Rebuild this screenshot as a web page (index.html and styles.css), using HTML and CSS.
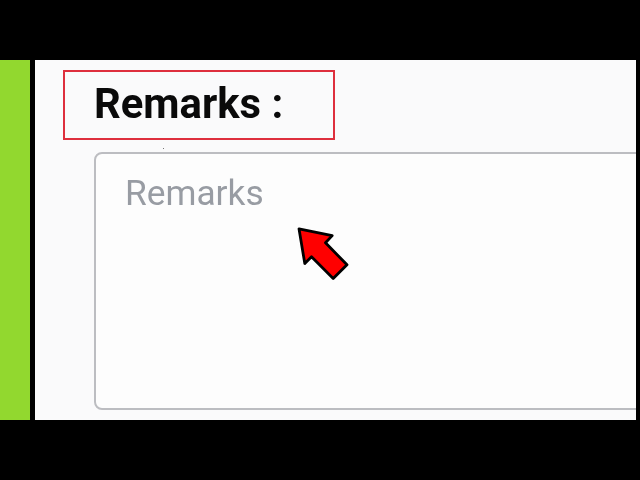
FILE: index.html
```html
<!DOCTYPE html>
<html lang="en">
<head>
<meta charset="utf-8">
<title>Remarks</title>
<link rel="stylesheet" href="styles.css">
</head>
<body>
<div class="frame">
  <div class="stripe"></div>
  <main class="page">
    <div class="heading"><h1>Remarks :</h1></div>
    <div class="field"><span class="placeholder">Remarks</span></div>
    <span class="speck"></span>
    <svg class="pointer" width="60" height="60" viewBox="0 0 60 60" aria-hidden="true">
      <path d="M4 3.8 L37.2 10.6 L30.5 17.8 L52 39.8 L38.2 53.6 L16.5 31.8 L9.8 38.6 Z" fill="#ff0000" stroke="#000" stroke-width="2.8" stroke-linejoin="round"/>
    </svg>
  </main>
</div>
</body>
</html>
```
FILE: styles.css
```css
html, body {
  margin: 0;
  height: 100%;
  background: #000;
  overflow: hidden;
}
.frame {
  display: flex;
  height: 360px;
  margin-top: 60px;
  padding-right: 4px;
}
.stripe {
  width: 30px;
  background: #92d82f;
  margin-right: 5px;
  flex: none;
}
.page {
  position: relative;
  flex: 1;
  min-width: 0;
  background: #fafafb;
  padding-top: 10px;
  overflow: hidden;
}
.heading {
  box-sizing: border-box;
  width: 272px;
  height: 70px;
  margin-left: 28px;
  padding-left: 29px;
  border: 2px solid #de2f3d;
  display: flex;
  align-items: center;
}
.heading h1 {
  margin: 0 0 4px;
  font: 700 41.8px "Roboto", "Liberation Sans", sans-serif;
  color: #0a0a0a;
  white-space: nowrap;
  filter: blur(0.4px);
}
.field {
  box-sizing: border-box;
  width: 560px;
  height: 258px;
  margin: 12px 0 0 59px;
  padding: 18px 0 0 29px;
  background: #fdfdfd;
  border: 2px solid #bcbdc1;
  border-radius: 8px;
}
.placeholder {
  font: 400 35.3px/1.2 "Roboto", "Liberation Sans", sans-serif;
  color: #989ca3;
  display: inline-block;
  filter: blur(0.4px);
}
.speck {
  position: absolute;
  left: 128px;
  top: 88px;
  width: 1px;
  height: 1px;
  background: #777;
}
.pointer {
  position: absolute;
  left: 260px;
  top: 165px;
}
```
